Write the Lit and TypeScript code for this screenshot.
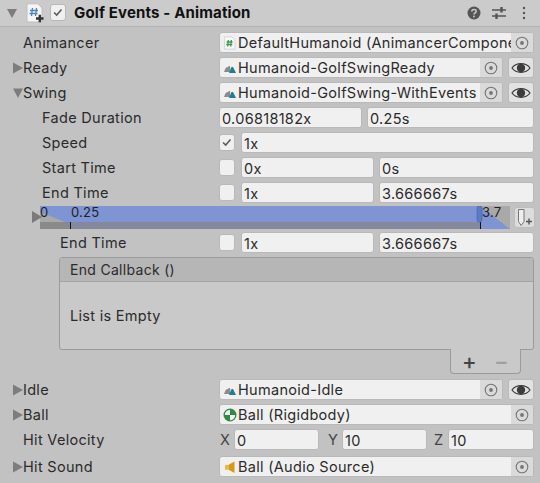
import { LitElement, html, css, svg } from "lit";
import { customElement } from "lit/decorators.js";

const humanoid = html`<svg class="ico" viewBox="0 0 14 14"><path d="M1 11 L2.6 7 L7 4.8 L7.5 11 Z" fill="#8b8b8b"/><path d="M6 12 L8.5 6 H10 L13 12 Z" fill="#1d7f95"/></svg>`;
const script = html`<svg class="ico" viewBox="0 0 14 14"><path d="M1.5 .8 H9 L12 3.8 V13.2 H1.5 Z" fill="#f7f7f7" stroke="#c4c4c4" stroke-width=".6"/><path d="M5.4 4 L4.7 10.5 M8.4 4 L7.7 10.5 M3.6 6 H9.6 M3.3 8.5 H9.3" stroke="#3f9b55" stroke-width="1.3" fill="none"/></svg>`;
const ball = html`<svg class="ico" viewBox="0 0 14 14"><circle cx="7" cy="7" r="6.5" fill="#2f8b3f"/><path d="M7 7 V1.8 A5.2 5.2 0 0 0 1.8 7 Z M7 7 V12.2 A5.2 5.2 0 0 0 12.2 7 Z" fill="#f2f2f2"/></svg>`;
const audio = html`<svg class="ico" viewBox="0 0 14 14"><path d="M2 5 H6 V9.8 H2 Z" fill="#e6b64a"/><path d="M6 4.5 L11.5 1.5 V13 L6 10 Z" fill="#d79a12"/></svg>`;
const picker = html`<svg class="pk" viewBox="0 0 14 14"><circle cx="7" cy="7" r="5.8" fill="none" stroke="#757575" stroke-width="1.1"/><circle cx="7" cy="7" r="1.9" fill="#757575"/></svg>`;
const eye = html`<button class="eye"><svg viewBox="0 0 20 14" width="20" height="14"><path d="M1 7 C5 1.2 15 1.2 19 7 C15 12.8 5 12.8 1 7 Z" fill="none" stroke="#3c3c3c" stroke-width="1.2"/><circle cx="10" cy="7" r="4.2" fill="#3c3c3c"/></svg></button>`;
const arrowR = html`<svg class="fold" viewBox="0 0 10 12"><path d="M0 .5 L10 6 L0 11.5 Z" fill="#7d7d7d"/></svg>`;
const arrowD = html`<svg class="fold" viewBox="0 0 10 12"><path d="M0 1.5 H10 L5 11 Z" fill="#7d7d7d"/></svg>`;
const check = svg`<path d="M3.5 8 L6.5 11 L12 4.5" fill="none" stroke="#5c5c5c" stroke-width="1.8"/>`;

@customElement("app-root")
export class AppRoot extends LitElement {
  static styles = css`
    :host { display: block; width: 540px; height: 483px; overflow: hidden; background: #c2c2c2; color: #2b2b2b;
      font: 14.5px/21px Inter, "Noto Sans", sans-serif; letter-spacing: .3px; }
    * { box-sizing: border-box; }
    .head { height: 27px; background: #cbcbcb; border-bottom: 1px solid #b2b2b2; display: flex; align-items: center; padding: 0 14px 1px 7px; }
    .head .tri { width: 10px; height: 10px; margin-right: 9px; }
    .doc { width: 18px; height: 20px; margin-right: 6px; }
    .title { font-weight: 700; font-size: 15px; margin-left: 8px; flex: 1; color: #111; letter-spacing: .15px; }
    .tools { display: flex; align-items: center; gap: 10px; }
    .t-help { margin-right: 1px; }
    .t-dots { margin-left: 6px; }
    .cb { width: 16px; height: 17px; flex: none; background: #f0f0f0; border: 1px solid #b9b9b9; border-radius: 3px; display: flex; }
    .cb svg { width: 14px; height: 15px; }
    .rows { display: flex; flex-direction: column; gap: 4px; padding: 5px 6px 0 0; }
    .row { display: flex; height: 21px; }
    .lab { width: 219px; flex: none; display: flex; align-items: center; white-space: nowrap; height: 21px; }
    .l0 { padding-left: 23px; } .l0f { padding-left: 13px; }
    .l1 { padding-left: 42px; } .l2 { padding-left: 60px; }
    .fold { width: 10px; height: 12px; flex: none; }
    .val { flex: 1; display: flex; gap: 5px; min-width: 0; align-items: stretch; }
    .f { background: #f0f0f0; border: 1px solid #b9b9b9; border-radius: 3px; padding: 0 2px; line-height: 21px; white-space: nowrap; min-width: 0; flex: 1; overflow: hidden; }
    .w143 { flex: none; width: 143px; } .w133 { flex: none; width: 133px; } .w85 { flex: none; width: 85px; }
    .obj { flex: 1; display: flex; background: #f0f0f0; border: 1px solid #b9b9b9; border-radius: 3px; min-width: 0; overflow: hidden; padding-left: 3px; align-items: center; }
    .ico { width: 14px; height: 14px; flex: none; margin-right: 1px; }
    .txt { flex: 1; min-width: 0; overflow: hidden; white-space: nowrap; line-height: 19px; }
    .pbtn { width: 22px; flex: none; align-self: stretch; background: #dadada; display: flex; align-items: center; justify-content: center; }
    .pk { width: 14px; height: 14px; }
    .eye { width: 26px; flex: none; background: #e2e2e2; border: 1px solid #b9b9b9; border-radius: 3px; padding: 0; display: flex; align-items: center; justify-content: center; }
    .chk { margin-right: 1px; align-self: center; }
    .tl { height: 23px; position: relative; margin: -1px 0; }
    .tl > svg.bg { position: absolute; left: 0; top: 0; }
    .tick { position: absolute; top: -3px; font-size: 13px; letter-spacing: .2px; line-height: 19px; color: #222; }
    .add { position: absolute; left: 514px; top: 1px; width: 21px; height: 21px; background: #dcdcdc; border: 1px solid #bdbdbd; border-radius: 3px; display: flex; }
    .group { margin-left: 59px; height: 93px; border: 1px solid #9b9b9b; border-radius: 3px; background: #c9c9c9; }
    .ghead { height: 24px; background: #b6b6b6; border-bottom: 1px solid #a4a4a4; padding-left: 10px; line-height: 23px; font-size: 14px; }
    .gbody { height: 67px; padding-left: 10px; display: flex; align-items: center; }
    .gfoot { position: relative; margin: -1px 13px 0 auto; width: 71px; height: 25px; background: #c9c9c9; border: 1px solid #9b9b9b; border-top: none; border-radius: 0 0 4px 4px; display: flex; align-items: center; justify-content: center; gap: 17px; font-size: 22px; font-weight: 500; line-height: 20px; color: #444; }
    .gfoot span + span { color: #a0a0a0; }
    .gap-idle { margin-top: 1px; }
    .gap-sound { margin-top: 2px; }
    .axis { flex: none; width: 15px; padding-left: 1px; color: #444; }
    .axgap8 { flex: none; width: 8px; } .axgap6 { flex: none; width: 6px; }
    .vec { gap: 0; }
  `;

  obj(icon: unknown, text: string, withEye = false) {
    return html`<div class="val"><div class="obj">${icon}<span class="txt">${text}</span><span class="pbtn">${picker}</span></div>${withEye ? eye : ""}</div>`;
  }

  render() {
    const timeline = html`
      <div class="tl">
        <svg class="bg" width="540" height="23" viewBox="0 0 540 23">
          <rect x="40" y="0" width="470" height="16" fill="#7f94d2" />
          <rect x="40" y="16" width="441" height="7" fill="#84899d" />
          <rect x="481" y="16" width="29" height="7" fill="#7f94d2" />
          <path d="M40 6 L65 16 H40 Z" fill="#a9a9a9" />
          <path d="M40 16 H65 L70 23 H40 Z" fill="#8a8a8a" />
          <path d="M32 5 L42 11 L32 17 Z" fill="#7a7a7a" />
          <path d="M480 0 H510 V23 Z" fill="#a9a9a9" />
          <rect x="70" y="16" width="1" height="7" fill="#111" />
          <rect x="480" y="16" width="1" height="7" fill="#111" />
          <rect x="477" y="0" width="5" height="16" rx="2" fill="#5a7bc8" stroke="#44619f" stroke-width=".6"/>
        </svg>
        <span class="tick" style="left:40px">0</span>
        <span class="tick" style="left:71px">0.25</span>
        <span class="tick" style="left:482px">3.7</span>
        <div class="add"><svg viewBox="0 0 19 19" width="19" height="19"><path d="M3.5 1.5 H9 V13.5 L6.2 17.5 L3.5 13.5 Z" fill="#eee" stroke="#777" stroke-width="1"/><path d="M11 13.5 H17 M14 10.5 V16.5" stroke="#555" stroke-width="1.4"/></svg></div>
      </div>`;
    return html`
      <div class="head">
        <svg class="tri" viewBox="0 0 10 10"><path d="M0 1 H10 L5 10 Z" fill="#7d7d7d"/></svg>
        <svg class="doc" viewBox="0 0 18 20"><path d="M1 .8 H12 L16 5 V19 H1 Z" fill="#f5f5f5" stroke="#bdbdbd"/><path d="M6.5 5 L5.5 13 M10.5 5 L9.5 13 M4 7.5 H12 M3.5 10.5 H11.5" stroke="#4f84b8" stroke-width="1.3" fill="none"/><path d="M10 15.5 H17.5 M13.8 11.8 V19.2" stroke="#333" stroke-width="2.4"/></svg>
        <span class="cb"><svg viewBox="0 0 16 16">${check}</svg></span>
        <span class="title">Golf Events - Animation</span>
        <span class="tools">
          <svg class="t-help" width="14" height="14" viewBox="0 0 14 14"><circle cx="7" cy="7" r="6.5" fill="#555"/><path d="M4.8 5.4 C4.8 2.8 9.2 2.8 9.2 5.3 C9.2 7 7 6.8 7 8.6" fill="none" stroke="#cbcbcb" stroke-width="1.5"/><rect x="6.2" y="9.6" width="1.6" height="1.7" fill="#cbcbcb"/></svg>
          <svg width="14" height="14" viewBox="0 0 14 14"><path d="M0 4 H14 M0 10 H14" stroke="#555" stroke-width="1.5"/><path d="M9.5 1 V6.5 M4.5 7.5 V13" stroke="#555" stroke-width="2.4"/></svg>
          <svg class="t-dots" width="4" height="14" viewBox="0 0 4 14"><circle cx="2" cy="2" r="1.2" fill="#555"/><circle cx="2" cy="7" r="1.2" fill="#555"/><circle cx="2" cy="12" r="1.2" fill="#555"/></svg>
        </span>
      </div>
      <div class="rows">
        <div class="row"><div class="lab l0">Animancer</div>${this.obj(script, "DefaultHumanoid (AnimancerComponent)")}</div>
        <div class="row"><div class="lab l0f">${arrowR}Ready</div>${this.obj(humanoid, "Humanoid-GolfSwingReady", true)}</div>
        <div class="row"><div class="lab l0f">${arrowD}Swing</div>${this.obj(humanoid, "Humanoid-GolfSwing-WithEvents", true)}</div>
        <div class="row"><div class="lab l1">Fade Duration</div><div class="val"><div class="f w143">0.06818182x</div><div class="f">0.25s</div></div></div>
        <div class="row"><div class="lab l1">Speed</div><div class="val"><span class="cb chk"><svg viewBox="0 0 16 16">${check}</svg></span><div class="f">1x</div></div></div>
        <div class="row"><div class="lab l1">Start Time</div><div class="val"><span class="cb chk"></span><div class="f w133">0x</div><div class="f">0s</div></div></div>
        <div class="row"><div class="lab l1">End Time</div><div class="val"><span class="cb chk"></span><div class="f w133">1x</div><div class="f">3.666667s</div></div></div>
        ${timeline}
        <div class="row"><div class="lab l2">End Time</div><div class="val"><span class="cb chk"></span><div class="f w133">1x</div><div class="f">3.666667s</div></div></div>
        <div>
          <div class="group">
            <div class="ghead">End Callback ()</div>
            <div class="gbody">List is Empty</div>
          </div>
          <div class="gfoot"><span>+</span><span>−</span></div>
        </div>
        <div class="row gap-idle"><div class="lab l0f">${arrowR}Idle</div>${this.obj(humanoid, "Humanoid-Idle", true)}</div>
        <div class="row"><div class="lab l0f">${arrowR}Ball</div>${this.obj(ball, "Ball (Rigidbody)")}</div>
        <div class="row"><div class="lab l0">Hit Velocity</div><div class="val vec"><span class="axis">X</span><div class="f w85">0</div><span class="axgap8"></span><span class="axis">Y</span><div class="f w85">10</div><span class="axgap6"></span><span class="axis">Z</span><div class="f">10</div></div></div>
        <div class="row gap-sound"><div class="lab l0f">${arrowR}Hit Sound</div>${this.obj(audio, "Ball (Audio Source)")}</div>
      </div>
    `;
  }
}
